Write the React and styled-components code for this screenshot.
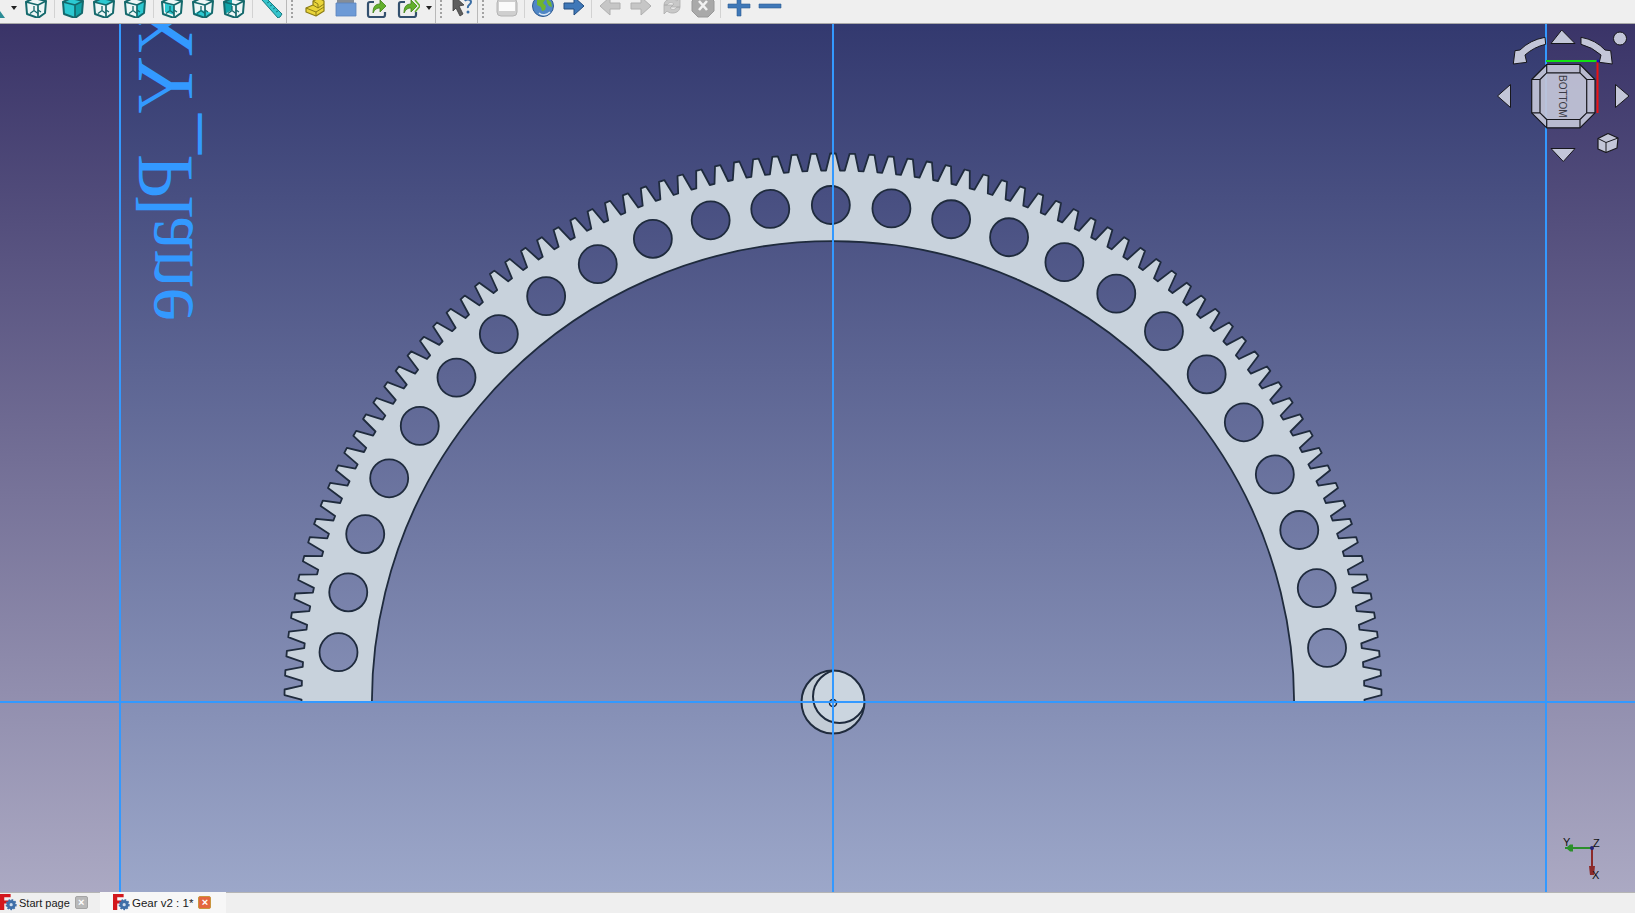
import React from "react";
import styled, { createGlobalStyle } from "styled-components";

const GlobalStyle = createGlobalStyle`
  html, body, #root { margin: 0; padding: 0; height: 100%; overflow: hidden; }
  body { font-family: "Liberation Sans", Arial, sans-serif; background: #efefef; }
`;

const Page = styled.div`
  height: 100vh;
  display: flex;
  flex-direction: column;
`;

/* ---------- toolbar (the real app window is scrolled, icons are cut off at the top) ---------- */

const Toolbar = styled.div`
  flex: 0 0 24px;
  box-sizing: border-box;
  height: 24px;
  background: #efefef;
  border-bottom: 1px solid #a9a9a9;
  display: flex;
  overflow: hidden;
`;

const Slot = styled.div`
  flex: 0 0 ${(p) => p.$w || 31}px;
  min-width: 0;
  height: 24px;
  margin-top: -6px;
  display: flex;
  justify-content: center;
  overflow: hidden;
  svg { flex: 0 0 24px; width: 24px; height: 24px; }
`;

const Sep = styled.div`
  flex: 0 0 ${(p) => p.$w || 5}px;
  height: 18px;
  &::after {
    content: "";
    display: block;
    width: 1px;
    height: 18px;
    margin: 0 auto;
    background: #d2d2d2;
  }
`;

const Handle = styled.div`
  flex: 0 0 ${(p) => p.$w || 13}px;
  box-sizing: border-box;
  height: 23px;
  border-left: 1px solid #b9b9b9;
  padding-left: 4px;
  &::after {
    content: "";
    display: block;
    width: 2px;
    height: 20px;
    background: repeating-linear-gradient(to bottom, #a2a2a2 0 2px, transparent 2px 4px);
  }
`;

const Caret = styled.div`
  flex: 0 0 ${(p) => p.$w || 12}px;
  height: 18px;
  display: flex;
  justify-content: center;
  padding-top: 6px;
  box-sizing: border-box;
  &::after {
    content: "";
    width: 0;
    height: 0;
    border-left: 3.5px solid transparent;
    border-right: 3.5px solid transparent;
    border-top: 4px solid #222;
  }
`;

const TEAL = "#14696c";
const CYAN = "#2cc9d1";
const DEEP = "#11a3a8";

const OUTLINE = "M2 8 10 4l12 3-1 12-7 5-11-4z";

const Wire = () => (
  <path d="M6 19.500l4-3 4 3M10 16.500V12M17 18l-3-2" fill="none" stroke={TEAL} strokeWidth="1.300" />
);

// the standard-view cubes: one outline, a shaded face depending on the view
const CubeIcon = ({ shade }) => (
  <svg viewBox="0 0 24 24">
    <path d={OUTLINE} fill="#edf6f6" />
    {shade === "solid" && <path d="M2 8l8-4 12 3-8 4v13L3 20z" fill={CYAN} />}
    {shade === "solid" && <path d="M14 11l8-4-1 12-7 5z" fill={DEEP} />}
    {shade === "top" && <path d="M2 8l8-4 12 3-8 4z" fill={CYAN} />}
    {shade === "right" && <path d="M14 11l8-4-1 12-7 5z" fill={CYAN} />}
    {shade === "back" && <path d="M5 9l9 3v9l-9-3z" fill={CYAN} />}
    {shade === "bottom" && <path d="M3 20l7-4 11 3-7 5z" fill={CYAN} />}
    {shade === "left" && <path d="M2 8l8-4v12l-7 4z" fill={DEEP} />}
    {shade !== "solid" && <Wire />}
    <path d="M2 8l12 3 8-4M14 11v13" fill="none" stroke={TEAL} strokeWidth="1.700" strokeLinejoin="round" />
    <path d={OUTLINE} fill="none" stroke={TEAL} strokeWidth="2" strokeLinejoin="round" />
  </svg>
);

const Ruler = () => (
  <svg viewBox="0 0 24 24">
    <path d="M3 6 7 4 23 20l-2 3-2 1z" fill="#35c4cc" stroke="#157a80" strokeWidth="1" />
    <path d="M8 9l2-1M11 12l2-1M14 15l2-1M17 18l2-1" stroke="#157a80" strokeWidth="1" />
  </svg>
);

const Part = () => (
  <svg viewBox="0 0 24 24">
    <path d="M3 14l7-3V7l6-3 5 3v10l-8 5-10-4z" fill="#e9d43a" stroke="#8c7d16" strokeWidth="1.200" strokeLinejoin="round" />
    <path d="M3 14l10 4 8-5M13 18v4M10 11l5 3 6-4M15 14v-4l-5-3" fill="none" stroke="#8c7d16" strokeWidth="1" />
  </svg>
);

const Folder = () => (
  <svg viewBox="0 0 24 24">
    <path d="M3 6h17v6H3z" fill="#858d97" />
    <path d="M2 9h20v13H2z" fill="#6d9ad6" stroke="#5a84bd" strokeWidth=".8" />
  </svg>
);

const LinkIcon = ({ double }) => (
  <svg viewBox="0 0 24 24">
    <path d="M9 8H5a2 2 0 0 0-2 2v11a2 2 0 0 0 2 2h13a2 2 0 0 0 2-2v-3" fill="none" stroke="#34506e" strokeWidth="2.200" />
    <path d="M8 19c0-6 2-9 7-9V6l6 6-6 6v-4c-3 0-5 1-7 5z" fill="#63b02c" stroke="#3f7f16" strokeWidth=".8" />
    {double && <path d="M19 6l5 6-5 6" fill="none" stroke="#63b02c" strokeWidth="1.600" />}
  </svg>
);

const WhatsThis = () => (
  <svg viewBox="0 0 24 24">
    <path d="M3 1l11 10-5 1 4 8-3 2-4-8-3 3z" fill="#5f5f5f" stroke="#3b3b3b" strokeWidth=".8" />
    <path d="M15 7c1-2 6-2 6 1 0 3-4 3-3 6" fill="none" stroke="#3a6ea5" strokeWidth="2" />
    <circle cx="18" cy="18" r="1.500" fill="#3a6ea5" />
  </svg>
);

const StopBox = () => (
  <svg viewBox="0 0 24 24">
    <rect x="2" y="5" width="20" height="17" rx="4" fill="#cfcfcf" stroke="#b4b4b4" />
    <rect x="4" y="8" width="16" height="9" fill="#fbfbfb" />
  </svg>
);

const Globe = () => (
  <svg viewBox="0 0 24 24">
    <circle cx="12" cy="12" r="10.500" fill="#4f86c6" stroke="#2f5a90" />
    <path d="M6 4l5-1 3 3-2 3 3 3-1 4-3 1-1-4-4-2zM15 4l5 4 1 5-3-1-2-3z" fill="#6fb52f" />
    <path d="M8 19c3 3 8 2 11-1" fill="none" stroke="#d8e6f4" strokeWidth="1.400" />
  </svg>
);

const ArrowIcon = ({ left, fill, stroke }) => (
  <svg viewBox="0 0 24 24">
    <path
      d="M2 9h10V3l10 9-10 9v-6H2z"
      transform={left ? "matrix(-1 0 0 1 24 0)" : undefined}
      fill={fill}
      stroke={stroke}
      strokeWidth="1"
      strokeLinejoin="round"
    />
  </svg>
);

const Refresh = () => (
  <svg viewBox="0 0 24 24">
    <path d="M4 11c0-6 9-8 13-4l3-3v9h-9l3-3c-2-2-5-2-7 1zM20 13c0 6-9 8-13 4l-3 3v-9h9l-3 3c2 2 5 2 7-1z" fill="#c8c8c8" stroke="#adadad" strokeWidth=".8" />
  </svg>
);

const StopRound = () => (
  <svg viewBox="0 0 24 24">
    <path d="M7 1h10l6 6v10l-6 6H7l-6-6V7z" fill="#a9a9a9" stroke="#989898" strokeLinejoin="round" />
    <path d="M8 7l8 9M16 7l-8 9" stroke="#f2f2f2" strokeWidth="2.600" />
  </svg>
);

const Plus = () => (
  <svg viewBox="0 0 24 24">
    <path d="M10 2h4v8h9v4h-9v8h-4v-8H1v-4h9z" fill="#3f78b8" stroke="#2c5a90" strokeWidth=".6" />
  </svg>
);

const Minus = () => (
  <svg viewBox="0 0 24 24">
    <path d="M1 10h22v4H1z" fill="#3f78b8" stroke="#2c5a90" strokeWidth=".6" />
  </svg>
);

const PartialIcon = () => (
  <svg viewBox="0 0 8 24">
    <path d="M0 17l5 7H0z" fill="#2b8c96" />
  </svg>
);

const ToolbarRow = () => (
  <Toolbar>
    <Slot $w={8}><PartialIcon /></Slot>
    <Caret />
    <Slot><CubeIcon /></Slot>
    <Sep $w={6} />
    <Slot><CubeIcon shade="solid" /></Slot>
    <Slot><CubeIcon shade="top" /></Slot>
    <Slot><CubeIcon shade="right" /></Slot>
    <Sep $w={6} />
    <Slot><CubeIcon shade="back" /></Slot>
    <Slot><CubeIcon shade="bottom" /></Slot>
    <Slot><CubeIcon shade="left" /></Slot>
    <Sep $w={6} />
    <Slot><Ruler /></Slot>
    <Handle />
    <Slot><Part /></Slot>
    <Slot><Folder /></Slot>
    <Slot><LinkIcon /></Slot>
    <Slot><LinkIcon double /></Slot>
    <Caret />
    <Handle $w={11} />
    <Slot><WhatsThis /></Slot>
    <Handle $w={14} />
    <Slot><StopBox /></Slot>
    <Sep />
    <Slot><Globe /></Slot>
    <Slot><ArrowIcon fill="#3f78b8" stroke="#234d80" /></Slot>
    <Sep />
    <Slot><ArrowIcon left fill="#c6c6c6" stroke="#b0b0b0" /></Slot>
    <Slot><ArrowIcon fill="#c6c6c6" stroke="#b0b0b0" /></Slot>
    <Slot><Refresh /></Slot>
    <Slot><StopRound /></Slot>
    <Sep />
    <Slot><Plus /></Slot>
    <Slot><Minus /></Slot>
  </Toolbar>
);

/* ---------- 3d view ---------- */

const Viewport = styled.div`
  flex: 1 1 auto;
  min-height: 0;
  background: linear-gradient(to bottom, #3a3468, #aba9c3);
  svg { display: block; width: 100%; height: 100%; }
`;

const CX = 833;
const CY = 702;
const R_TIP = 548.5;
const R_ROOT = 531.5;
const R_BORE = 461;
const R_HOLE = 497;
const TEETH = 178;

const polar = (r, deg) => {
  const a = (deg * Math.PI) / 180;
  return [CX + r * Math.sin(a), CY - r * Math.cos(a)];
};

const gearPath = () => {
  const pitch = 360 / TEETH;
  const pts = [];
  for (let i = -46; i <= 46; i++) {
    const c = i * pitch;
    pts.push(polar(R_ROOT, c - pitch / 2 + 0.26));
    pts.push(polar(R_TIP, c - 0.29));
    pts.push(polar(R_TIP, c + 0.29));
    pts.push(polar(R_ROOT, c + pitch / 2 - 0.26));
  }
  const outline = pts.map((p, i) => `${i ? "L" : "M"}${p[0].toFixed(1)} ${p[1].toFixed(1)}`).join("");
  const [bx, by] = polar(R_BORE, 100);
  const [ax, ay] = polar(R_BORE, -100);
  return `${outline}L${bx.toFixed(1)} ${by.toFixed(1)}A${R_BORE} ${R_BORE} 0 1 0 ${ax.toFixed(1)} ${ay.toFixed(1)}Z`;
};

const holes = [];
for (let i = -12; i <= 12; i++) holes.push(polar(R_HOLE, -0.25 + i * 7));

const INK = "#1f2b3d";
const GEAR = "#c8d2dc";
const BLUE = "#3399ff";
const NAV = "#c3c6d8";
const NAV_LINE = "#17171c";

// holes show the background, so they are cut with a mask rather than painted
const GearMask = () => (
  <mask id="gear-holes" maskUnits="userSpaceOnUse" x="0" y="0" width="1635" height="913">
    <rect x="0" y="0" width="1635" height="913" fill="#fff" />
    {holes.map(([x, y], i) => (
      <circle key={i} cx={x} cy={y} r="19" fill="#000" />
    ))}
  </mask>
);

const GearShape = () => (
  <g clipPath="url(#above-axis)">
    <g mask="url(#gear-holes)">
      <path d={gearPath()} fill={GEAR} stroke={INK} strokeWidth="1.800" strokeLinejoin="round" />
    </g>
    {holes.map(([x, y], i) => (
      <circle key={i} cx={x} cy={y} r="19" fill="none" stroke={INK} strokeWidth="1.800" />
    ))}
  </g>
);

const Shaft = () => (
  <g>
    <circle cx={CX} cy={CY} r="31.5" fill="#c3ccd6" />
    <g clipPath="url(#shaft-disc)">
      <circle cx="839.5" cy="696.5" r="26.5" fill="#cbd5df" stroke={INK} strokeWidth="2" />
      <path d="M833 670h40v20h-40z" fill="#cbd5df" />
    </g>
    <circle cx={CX} cy={CY} r="31.5" fill="none" stroke={INK} strokeWidth="2" />
    <circle cx={CX} cy="703" r="3.500" fill="none" stroke={INK} strokeWidth="1.500" />
  </g>
);

const LABEL_FONT = "'Liberation Serif', 'Times New Roman', serif";

const PlaneLabel = () => (
  <g fontFamily={LABEL_FONT} fontSize="80" fill={BLUE}>
    <text transform="matrix(0 1 1 0 192 0)" x="-1 57 114 154 196" y="0">
      XY_Pl
    </text>
    <text transform="matrix(0 1 1 0 192 0)" x="216" y="0" textLength="105" lengthAdjust="spacingAndGlyphs">
      ane
    </text>
  </g>
);

const NavTri = ({ points }) => <polygon points={points} fill={NAV} stroke={NAV_LINE} strokeWidth="1" strokeLinejoin="round" />;

const NavCube = () => (
  <g>
    <NavTri points="1561.7,30 1551,43.5 1575,43.5" />
    <NavTri points="1551,148.5 1575,148.5 1563.3,161.5" />
    <NavTri points="1510.5,84.5 1497.5,96 1510.5,107.5" />
    <NavTri points="1615.5,84.5 1629,96 1615.5,107.5" />
    <circle cx="1620" cy="38.5" r="6.5" fill={NAV} stroke={NAV_LINE} />
    <path d="M1545 37.300Q1530 40 1520 50L1515 50.700 1513.300 64 1526.700 62.300 1525 55Q1534 47 1545.700 44.300Z" fill={NAV} stroke={NAV_LINE} strokeLinejoin="round" />
    <path d="M1581 37.300Q1596 40 1605 50L1610.700 50.700 1612.300 64 1599.300 62.300 1601 55Q1592 47 1581 44.300Z" fill={NAV} stroke={NAV_LINE} strokeLinejoin="round" />
    <path d="M1598 138.500l10-5 10 4.500-1 10-11 4.500-8-3.500z" fill={NAV} stroke={NAV_LINE} strokeWidth="1.200" strokeLinejoin="round" />
    <path d="M1598 138.500l8 4 12-4.500M1606 142.500v10" fill="none" stroke={NAV_LINE} />
    <g stroke={NAV_LINE} strokeWidth="1.200" strokeLinejoin="round">
      <path d="M1546.700 64.500h33.300l15 15v33.300l-15 15h-33.300l-15-15v-33.300z" fill={NAV} fillOpacity=".92" />
      <path d="M1546.700 64.500v8.300h33.300v-8.300M1580 72.800l6.700 6.700h8.300M1586.700 79.500v33.300M1595 112.800h-8.300l-6.700 6.700v8.300M1580 119.500h-33.300v8.300M1546.700 119.500l-6.700-6.700h-8.300M1540 112.800v-33.300M1531.700 79.500h8.300l6.700-6.700" fill="none" />
    </g>
    <text x="0" y="0" transform="translate(1558.500 75) rotate(90)" fontFamily="'Liberation Sans', Arial, sans-serif" fontSize="10" fill="#3a3a44">
      BOTTOM
    </text>
    <path d="M1546 61h51" stroke="#12e012" strokeWidth="2" />
    <path d="M1597.500 61v52" stroke="#f01010" strokeWidth="2" />
    <circle cx="1598" cy="61" r="1.500" fill="#1010c0" />
  </g>
);

const AxisCross = () => (
  <g fontFamily="'Liberation Sans', Arial, sans-serif" fontSize="11" fill="#111">
    <path d="M1565 848h27" stroke="#2b8f2b" strokeWidth="2" />
    <path d="M1566 848l4-3.500h3v7h-3z" fill="#2b8f2b" />
    <path d="M1592 848v27" stroke="#8c2a2a" strokeWidth="2" />
    <path d="M1589 866h6l-1 9h-4z" fill="#8c2a2a" />
    <circle cx="1592" cy="848" r="2" fill="#22227a" />
    <text x="1563" y="846">Y</text>
    <text x="1593" y="847">Z</text>
    <text x="1592" y="879">X</text>
  </g>
);

const Scene = () => (
  <svg viewBox="0 24 1635 868" preserveAspectRatio="xMinYMin slice">
    <defs>
      <linearGradient id="plane" x1="0" y1="0" x2="0" y2="1">
        <stop offset="0" stopColor="#33396f" />
        <stop offset="1" stopColor="#9ca7c9" />
      </linearGradient>
      <clipPath id="above-axis">
        <rect x="0" y="0" width="1635" height={CY} />
      </clipPath>
      <clipPath id="shaft-disc">
        <circle cx={CX} cy={CY} r="31.5" />
      </clipPath>
      <GearMask />
    </defs>
    <rect x="120" y="24" width="1426" height="868" fill="url(#plane)" />
    <GearShape />
    <Shaft />
    <PlaneLabel />
    <path d="M120 24v868M833 24v868M1546 24v868M0 702h1635" stroke={BLUE} strokeWidth="2" />
    <NavCube />
    <AxisCross />
  </svg>
);

/* ---------- document tabs ---------- */

const TabBar = styled.div`
  flex: 0 0 21px;
  box-sizing: border-box;
  height: 21px;
  background: #efefef;
  border-top: 1px solid #b5b5b5;
  display: flex;
`;

const Tab = styled.div`
  display: flex;
  align-items: center;
  box-sizing: border-box;
  height: 21px;
  margin-top: -1px;
  width: ${(p) => p.$w}px;
  padding-left: ${(p) => p.$pad}px;
  background: ${(p) => (p.$active ? "#f7f7f7" : "transparent")};
  font-size: ${(p) => p.$size}px;
  color: #1a1a1a;
  white-space: nowrap;
`;

const TabLabel = styled.span`
  margin-left: 2px;
  margin-right: 5px;
`;

const CloseBtn = styled.span`
  flex: 0 0 13px;
  height: 13px;
  box-sizing: border-box;
  border-radius: 2px;
  background: ${(p) => (p.$hot ? "#e4673f" : "#b9b9b9")};
  border: 1px solid ${(p) => (p.$hot ? "#c9963f" : "#a4a4a4")};
  display: flex;
  align-items: center;
  justify-content: center;
  color: #fff;
  font: bold 11px/1 "Liberation Sans", Arial, sans-serif;
`;

const FreeCadLogo = () => (
  <svg width="17" height="17" viewBox="0 0 16 16">
    <path d="M0 0h10v3H4v3h5v3H4v6H0z" fill="#d3171c" />
    <circle cx="10.500" cy="10" r="4.200" fill="#3f6fa8" stroke="#3f6fa8" strokeWidth="2" strokeDasharray="1.600 1.200" />
    <circle cx="10.500" cy="10" r="3.800" fill="#3f6fa8" />
    <circle cx="10.500" cy="10" r="1.500" fill="#cfdcec" />
  </svg>
);

const Tabs = () => (
  <TabBar>
    <Tab $w={100} $pad={0} $size={11}>
      <FreeCadLogo />
      <TabLabel>Start page</TabLabel>
      <CloseBtn>×</CloseBtn>
    </Tab>
    <Tab $w={126} $pad={13} $size={11.5} $active>
      <FreeCadLogo />
      <TabLabel>Gear v2 : 1*</TabLabel>
      <CloseBtn $hot>×</CloseBtn>
    </Tab>
  </TabBar>
);

export default function App() {
  return (
    <Page>
      <GlobalStyle />
      <ToolbarRow />
      <Viewport>
        <Scene />
      </Viewport>
      <Tabs />
    </Page>
  );
}
